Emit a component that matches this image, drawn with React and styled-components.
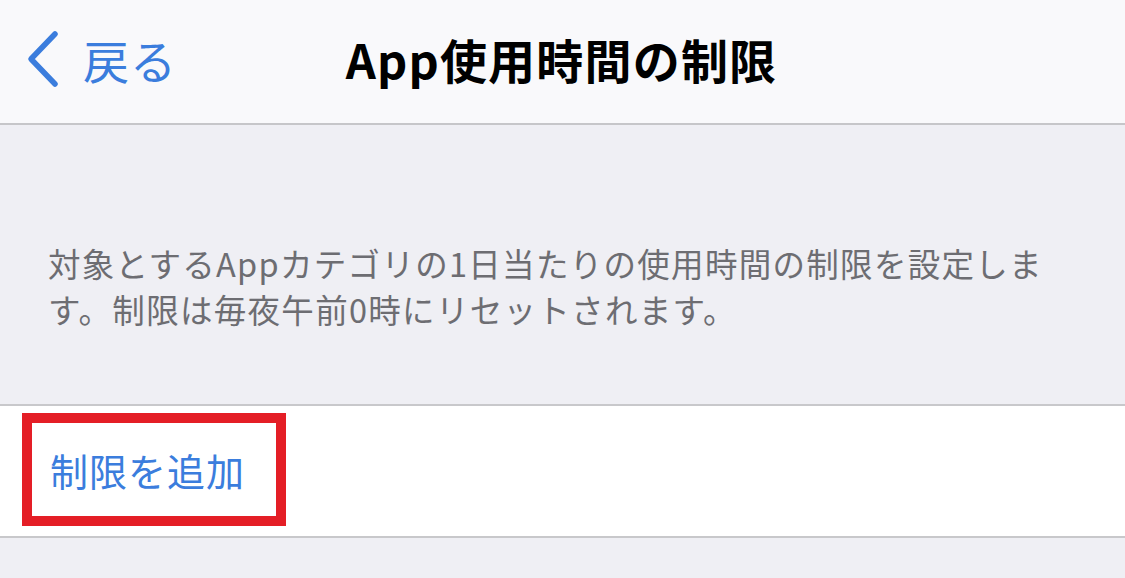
import React from "react";
import styled, { createGlobalStyle } from "styled-components";

const GlobalStyle = createGlobalStyle`
  html, body {
    margin: 0;
    padding: 0;
    background: #efeff4;
    font-family: "Noto Sans CJK JP", "Noto Sans", "Liberation Sans", sans-serif;
  }
`;

const Screen = styled.div`
  width: 1125px;
  height: 578px;
  display: flex;
  flex-direction: column;
  background: #efeff4;
  overflow: hidden;
`;

const NavBar = styled.header`
  height: 125px;
  flex-shrink: 0;
  box-sizing: border-box;
  padding-bottom: 6px;
  display: grid;
  grid-template-columns: 1fr auto 1fr;
  align-items: center;
  background: #f9f9fb;
  border-bottom: 2px solid #c6c6c9;
`;

const BackButton = styled.div`
  display: flex;
  align-items: center;
  gap: 22px;
  padding-left: 25px;
  color: #3b7ddd;
  font-size: 46px;
  letter-spacing: 1px;
  svg {
    display: block;
  }
`;

const Title = styled.h1`
  margin: 0;
  font-size: 47px;
  font-weight: 700;
  color: #000;
  letter-spacing: 1.2px;
  margin-left: -2px;
`;

const Note = styled.section`
  flex-shrink: 0;
  height: 279px;
  box-sizing: border-box;
  padding: 115px 40px 0 48px;
  font-size: 32.5px;
  line-height: 46px;
  letter-spacing: 1.3px;
  color: #6d6d72;
`;

const Row = styled.div`
  position: relative;
  height: 130px;
  flex-shrink: 0;
  display: flex;
  align-items: center;
  padding-left: 50px;
  background: #fff;
  border-top: 2px solid #c8c8cb;
  border-bottom: 2px solid #c8c8cb;
`;

const RowLabel = styled.span`
  font-size: 38px;
  color: #3b7ddd;
  letter-spacing: 1px;
  margin-top: -4px;
`;

const Highlight = styled.div`
  position: absolute;
  left: 22px;
  top: 7px;
  width: 264px;
  height: 113px;
  box-sizing: border-box;
  border: 10px solid #e41e26;
`;

const Chevron = () => (
  <svg width="36" height="60" viewBox="0 0 36 60">
    <path
      d="M30 5 L6 30 L30 55"
      fill="none"
      stroke="#3b7ddd"
      strokeWidth="5.5"
      strokeLinecap="round"
      strokeLinejoin="round"
    />
  </svg>
);

export default function App() {
  return (
    <>
      <GlobalStyle />
      <Screen>
        <NavBar>
          <BackButton>
            <Chevron />
            <span>戻る</span>
          </BackButton>
          <Title>App使用時間の制限</Title>
          <div />
        </NavBar>
        <Note>
          対象とするAppカテゴリの1日当たりの使用時間の制限を設定しま
          <br />
          す。制限は毎夜午前0時にリセットされます。
        </Note>
        <Row>
          <RowLabel>制限を追加</RowLabel>
          <Highlight />
        </Row>
      </Screen>
    </>
  );
}
